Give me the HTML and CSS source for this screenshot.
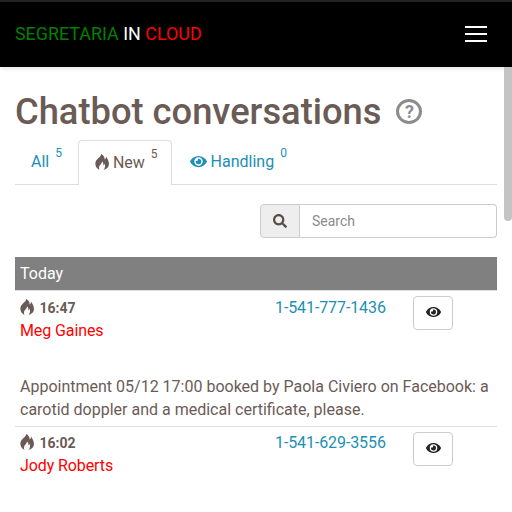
FILE: index.html
```html
<!DOCTYPE html>
<html>
<head>
    <title>Chatbot conversations</title>
    <link rel="stylesheet" href="styles.css">
</head>
<body>
    <svg class="icon-defs" width="0" height="0">
        <symbol id="fire" viewBox="0 0 14 16"><path d="M6 0C6.5 2.5 2.5 4 1 7C-.5 10 .5 14 4.5 16C3.5 14 4 12 5.5 10.5C6.5 9.5 7 8.5 7 7.5C8.5 8.5 8.5 10 8.2 11.5C9 11 9.5 10.5 9.5 9.5C10.5 12 10 14.5 8.5 16C12 15 14 13 14 10C14 7 12.5 5 11 2.5C11 4 10.5 5 9.5 5.5C10 3.5 8.5 1 6 0Z"/></symbol>
        <symbol id="eye" viewBox="0 0 576 512"><path d="M572.52 241.4C518.29 135.59 410.93 64 288 64S57.68 135.64 3.48 241.41a32.35 32.35 0 0 0 0 29.19C57.71 376.41 165.07 448 288 448s230.32-71.64 284.52-177.41a32.35 32.35 0 0 0 0-29.19zM288 400a144 144 0 1 1 144-144 143.93 143.93 0 0 1-144 144zm0-240a95.31 95.31 0 0 0-25.31 3.79 47.85 47.85 0 0 1-66.9 66.9A95.78 95.78 0 1 0 288 160z"/></symbol>
        <symbol id="search" viewBox="0 0 512 512"><path d="M505 442.7L405.3 343c-4.5-4.5-10.6-7-17-7H372c27.6-35.3 44-79.7 44-128C416 93.1 322.9 0 208 0S0 93.1 0 208s93.1 208 208 208c48.3 0 92.7-16.4 128-44v16.3c0 6.4 2.5 12.5 7 17l99.7 99.7c9.4 9.4 24.6 9.4 33.9 0l28.3-28.3c9.4-9.4 9.4-24.6.1-34zM208 336c-70.7 0-128-57.2-128-128 0-70.7 57.2-128 128-128 70.7 0 128 57.2 128 128 0 70.7-57.2 128-128 128z"/></symbol>
    </svg>

    <nav class="navbar">
        <div class="brand"><span class="brand-green">SEGRETARIA</span> <span class="brand-white">IN</span> <span class="brand-red">CLOUD</span></div>
        <div class="burger"><span></span><span></span><span></span></div>
    </nav>

    <div class="scroll-thumb"></div>

    <div class="container">
        <h1 class="page-title">Chatbot conversations <span class="help-icon">?</span></h1>

        <ul class="tabs">
            <li class="tab"><a>All</a><sup>5</sup></li>
            <li class="tab tab-active"><svg class="icon icon-fire"><use href="#fire"/></svg> <a>New</a><sup>5</sup></li>
            <li class="tab tab-handling"><svg class="icon icon-eye"><use href="#eye"/></svg> <a>Handling</a><sup>0</sup></li>
        </ul>

        <div class="search-row">
            <div class="search-group">
                <span class="search-addon"><svg class="icon icon-search"><use href="#search"/></svg></span>
                <input class="search-input" type="text" placeholder="Search">
            </div>
        </div>

        <div class="day-header">Today</div>

        <div class="conv">
            <div class="conv-top">
                <div class="conv-who">
                    <div class="conv-time"><svg class="icon icon-fire"><use href="#fire"/></svg> 16:47</div>
                    <div class="conv-name">Meg Gaines</div>
                </div>
                <a class="conv-phone">1-541-777-1436</a>
                <button class="eye-btn"><svg class="icon icon-eye"><use href="#eye"/></svg></button>
            </div>
            <p class="conv-text">Appointment 05/12 17:00 booked by Paola Civiero on Facebook: a carotid doppler and a medical certificate, please.</p>
        </div>

        <div class="conv">
            <div class="conv-top">
                <div class="conv-who">
                    <div class="conv-time"><svg class="icon icon-fire"><use href="#fire"/></svg> 16:02</div>
                    <div class="conv-name">Jody Roberts</div>
                </div>
                <a class="conv-phone">1-541-629-3556</a>
                <button class="eye-btn"><svg class="icon icon-eye"><use href="#eye"/></svg></button>
            </div>
        </div>
    </div>
</body>
</html>
```

FILE: styles.css
```css
html, body {
    height: 100%;
    overflow: hidden;
}
body {
    margin: 0;
    font-family: Roboto, "Liberation Sans", sans-serif;
    font-size: 16px;
    line-height: 1.42857;
    color: #6b5b56;
    background: #fff;
}
.icon-defs {
    position: absolute;
}
.icon {
    display: inline-block;
    fill: currentColor;
    vertical-align: -2px;
}
.icon-fire { width: 14px; height: 16px; }
.icon-eye { width: 17px; height: 15px; }
.icon-search { width: 14px; height: 14px; }

.navbar {
    display: flex;
    justify-content: space-between;
    align-items: center;
    box-sizing: border-box;
    height: 67px;
    padding: 0 25px 2px 15px;
    background: #000;
    border-top: 2px solid #222;
    box-shadow: 0 2px 4px rgba(0,0,0,0.1);
}
.brand { font-size: 17.9px; }
.brand-green { color: #008000; }
.brand-white { color: #fff; }
.brand-red { color: #f00; }
.burger {
    display: flex;
    flex-direction: column;
    gap: 5px;
}
.burger span {
    display: block;
    width: 22px;
    height: 2px;
    background: #fff;
}

.scroll-thumb {
    position: absolute;
    top: 67px;
    right: 0;
    width: 8px;
    height: 154px;
    background: #c4c4c4;
    border-radius: 0 0 4px 4px;
}

.container {
    padding: 0 15px;
    width: 482px;
}
.page-title {
    margin: 23px 0 0;
    font-size: 36.3px;
    line-height: 43px;
    font-weight: 500;
    display: flex;
    align-items: center;
}
.help-icon {
    display: inline-block;
    box-sizing: border-box;
    width: 26px;
    height: 25px;
    margin-left: 15px;
    border: 3px solid #8c8c8c;
    border-radius: 50%;
    color: #8c8c8c;
    font-size: 18px;
    font-weight: 700;
    line-height: 19px;
    text-align: center;
}

.tabs {
    display: flex;
    list-style: none;
    margin: 7px 0 0;
    padding: 0;
    height: 44px;
    border-bottom: 1px solid #ddd;
}
.tab {
    box-sizing: border-box;
    height: 44px;
    padding: 11px 16px;
    color: #1d8fb3;
    white-space: nowrap;
}
.tab sup {
    font-size: 12px;
    line-height: 0;
    margin-left: 6px;
    vertical-align: 10px;
}
.tab-active {
    height: 45px;
    padding: 11px 13px 0 16px;
    color: #6b5b56;
    background: #fff;
    border: 1px solid #ddd;
    border-bottom: 0;
    border-radius: 4px 4px 0 0;
}
.tab-handling { padding-left: 18px; }

.search-row {
    display: flex;
    justify-content: flex-end;
    margin-top: 19px;
}
.search-group {
    display: flex;
    width: 237px;
    height: 34px;
}
.search-addon {
    display: flex;
    align-items: center;
    justify-content: center;
    box-sizing: border-box;
    width: 40px;
    color: #5a4d48;
    background: #eee;
    border: 1px solid #ccc;
    border-radius: 4px 0 0 4px;
}
.search-input {
    flex: 1;
    min-width: 0;
    box-sizing: border-box;
    padding: 0 12px;
    font: 14px Roboto, sans-serif;
    border: 1px solid #ccc;
    border-left: 0;
    border-radius: 0 4px 4px 0;
    outline: none;
}
.search-input::placeholder { color: #8b8b8b; }

.day-header {
    box-sizing: border-box;
    height: 34px;
    margin-top: 19px;
    padding: 6px 5px 0;
    color: #fff;
    background: #808080;
    border-bottom: 1px solid #ddd;
}

.conv {
    padding: 5px 5px 0;
    border-bottom: 1px solid #ddd;
}
.conv:last-child { border-bottom: 0; }
.conv-top { display: flex; }
.conv-who {
    width: 255px;
    padding-top: 1px;
}
.conv-time {
    font-size: 14px;
    line-height: 22px;
    font-weight: 700;
}
.conv-time .icon { margin-right: 2px; }
.conv-name {
    margin-top: 1px;
    color: #f00;
    letter-spacing: -0.1px;
}
.conv-phone {
    width: 138px;
    padding-top: 1px;
    color: #1d8fb3;
    letter-spacing: -0.1px;
}
.conv + .conv .conv-who,
.conv + .conv .conv-phone { padding-top: 0; }
.eye-btn {
    display: flex;
    align-items: center;
    justify-content: center;
    box-sizing: border-box;
    width: 40px;
    height: 34px;
    color: #222;
    background: #fff;
    border: 1px solid #ccc;
    border-radius: 4px;
}
.eye-btn .icon {
    width: 15px;
    height: 14px;
    margin-bottom: 2px;
}
.conv-text {
    margin: 33px 0 4px;
}
```
